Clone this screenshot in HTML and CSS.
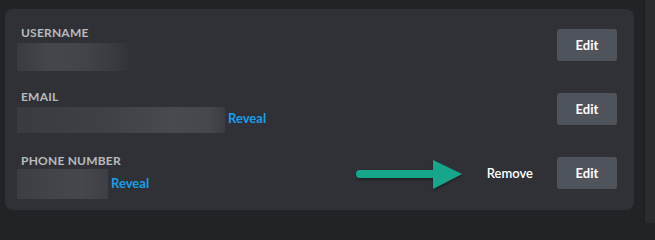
FILE: index.html
```html
<!DOCTYPE html>
<html lang="en">
<head>
<meta charset="utf-8">
<title>My Account</title>
<link rel="stylesheet" href="styles.css">
</head>
<body>
<div class="page">
  <main class="main">
    <section class="card">
      <div class="row">
        <div class="info">
          <div class="label">Username</div>
          <div class="value">
            <span class="redacted redacted-user"></span>
          </div>
        </div>
        <div class="actions">
          <button class="btn">Edit</button>
        </div>
      </div>
      <div class="row">
        <div class="info">
          <div class="label">Email</div>
          <div class="value">
            <span class="redacted redacted-email"></span>
            <a class="reveal" href="#">Reveal</a>
          </div>
        </div>
        <div class="actions">
          <button class="btn">Edit</button>
        </div>
      </div>
      <div class="row">
        <div class="info">
          <div class="label">Phone Number</div>
          <div class="value">
            <span class="redacted redacted-phone"></span>
            <a class="reveal" href="#">Reveal</a>
          </div>
        </div>
        <div class="actions">
          <button class="link-btn">Remove</button>
          <button class="btn">Edit</button>
        </div>
      </div>
      <svg class="arrow" width="120" height="40" viewBox="0 0 120 40" aria-hidden="true">
        <g filter="url(#sh)">
          <line x1="9" y1="17" x2="86" y2="17" stroke="#18a68a" stroke-width="8" stroke-linecap="round"/>
          <polygon points="82,3 111,17 82,32" fill="#18a68a"/>
        </g>
        <defs>
          <filter id="sh" x="-10%" y="-20%" width="120%" height="160%">
            <feDropShadow dx="0" dy="1.5" stdDeviation="1.2" flood-color="#000" flood-opacity="0.45"/>
          </filter>
        </defs>
      </svg>
    </section>
  </main>
  <div class="scroll-track"></div>
</div>
</body>
</html>
```
FILE: styles.css
```css
* { box-sizing: border-box; }

html, body {
  margin: 0;
  padding: 0;
  background: #202225;
  font-family: Lato, "Noto Sans", "Open Sans", sans-serif;
  overflow: hidden;
}

.page {
  display: flex;
  width: 655px;
  height: 223px;
}

.main {
  flex: 0 0 643px;
  padding: 9px 0 0 5px;
  background: #222327;
}

.card {
  position: relative;
  width: 629px;
  height: 201px;
  background: #2f3136;
  border-radius: 8px;
  padding: 16px 17px 0 16px;
  display: flex;
  flex-direction: column;
  gap: 18px;
}

.row {
  display: flex;
  justify-content: space-between;
  align-items: flex-start;
  height: 46px;
}

.info {
  display: flex;
  flex-direction: column;
}

.label {
  font-size: 12px;
  line-height: 16px;
  font-weight: 700;
  text-transform: uppercase;
  color: #b9bbbe;
  letter-spacing: 0.2px;
}

.value {
  display: flex;
  align-items: center;
  margin-left: -4px;
}

.redacted {
  display: block;
  border-radius: 1px;
}

.redacted-user {
  width: 111px;
  height: 28px;
  margin-top: 2px;
  background: linear-gradient(90deg, #393b40 0%, #45474c 30%, #42444a 60%, #37393e 90%, #313338 100%);
}

.redacted-email {
  width: 208px;
  height: 26px;
  margin-top: 2px;
  background: linear-gradient(90deg, #393b40 0%, #3e4045 40%, #484a4f 75%, #45474c 92%, #3b3d42 100%);
}

.redacted-phone {
  width: 91px;
  height: 30px;
  background: linear-gradient(90deg, #3c3e43 0%, #424449 40%, #45474c 70%, #3e4045 100%);
}

.reveal {
  margin-left: 3px;
  font-size: 13px;
  font-weight: 700;
  color: #1a9fe9;
  text-decoration: none;
  margin-top: -3px;
}

.actions {
  display: flex;
  align-items: center;
  gap: 24px;
  margin-top: 4px;
}

.btn {
  width: 60px;
  height: 32px;
  border: none;
  border-radius: 3px;
  background: #4f545c;
  color: #ffffff;
  font-family: inherit;
  font-size: 13px;
  font-weight: 700;
  padding: 0;
  cursor: pointer;
}

.link-btn {
  border: none;
  background: none;
  color: #ffffff;
  font-family: inherit;
  font-size: 13px;
  font-weight: 600;
  padding: 0;
  cursor: pointer;
}

.arrow {
  position: absolute;
  left: 346px;
  top: 148px;
}

.scroll-track {
  flex: 0 0 12px;
  background: #2a2c30;
  border-left: 2px solid #1f2023;
}
```
